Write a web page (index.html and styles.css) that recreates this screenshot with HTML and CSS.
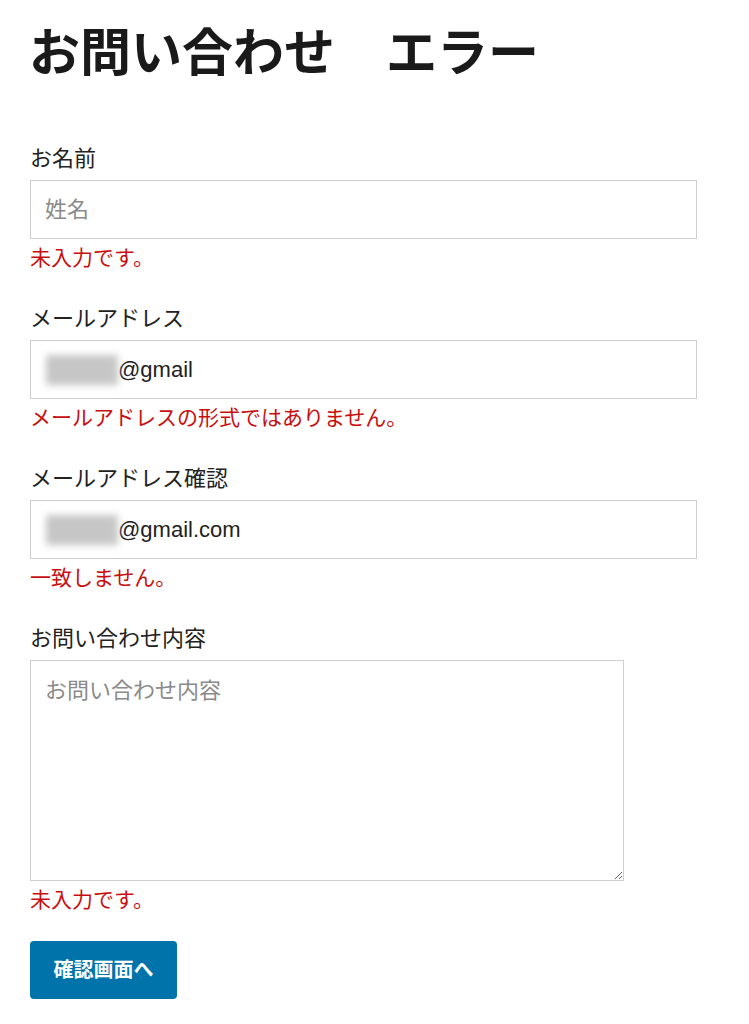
FILE: index.html
```html
<!DOCTYPE html>
<html lang="ja">
<head>
<meta charset="utf-8">
<title>お問い合わせ エラー</title>
<link rel="stylesheet" href="styles.css">
</head>
<body>
<main class="page">
  <h1 class="title">お問い合わせ　エラー</h1>
  <form class="form">
    <div class="field">
      <label class="label" for="name">お名前</label>
      <input class="input" id="name" type="text" placeholder="姓名">
      <p class="error">未入力です。</p>
    </div>
    <div class="field">
      <label class="label">メールアドレス</label>
      <div class="input input-filled"><span class="masked"></span>@gmail</div>
      <p class="error">メールアドレスの形式ではありません。</p>
    </div>
    <div class="field">
      <label class="label">メールアドレス確認</label>
      <div class="input input-filled"><span class="masked"></span>@gmail.com</div>
      <p class="error">一致しません。</p>
    </div>
    <div class="field">
      <label class="label" for="body">お問い合わせ内容</label>
      <textarea class="textarea" id="body" placeholder="お問い合わせ内容"></textarea>
      <p class="error">未入力です。</p>
    </div>
    <div class="actions">
      <button class="button" type="button">確認画面へ</button>
    </div>
  </form>
</main>
</body>
</html>
```

FILE: styles.css
```css
* {
  box-sizing: border-box;
}

body {
  margin: 0;
  background: #ffffff;
  color: #222222;
  font-family: "Liberation Sans", "Noto Sans CJK JP", sans-serif;
}

.page {
  padding: 24px 30px 0 29px;
}

.title {
  margin: 0;
  font-size: 51px;
  line-height: 60px;
  font-weight: 700;
  color: #1a1a1a;
}

.form {
  margin-top: 60px;
  margin-left: 1px;
  width: 667px;
  display: flex;
  flex-direction: column;
}

.field {
  display: flex;
  flex-direction: column;
}

.field + .field {
  margin-top: 31px;
}

.label {
  display: block;
  font-size: 22px;
  line-height: 30px;
  color: #222222;
  margin-bottom: 6px;
}

.input {
  width: 667px;
  height: 59px;
  border: 1px solid #cfcfcf;
  border-radius: 0;
  padding: 0 14px;
  font-family: inherit;
  font-size: 22px;
  color: #222222;
  background: #ffffff;
  outline: none;
}

.input::placeholder,
.textarea::placeholder {
  color: #8a8a8a;
}

.input-filled {
  display: flex;
  align-items: center;
}

.masked {
  display: inline-block;
  width: 72px;
  height: 30px;
  background: #c6c6c6;
  filter: blur(3.5px);
  margin-left: 1px;
}

.textarea {
  width: 594px;
  height: 221px;
  border: 1px solid #cfcfcf;
  border-radius: 0;
  padding: 15px 14px;
  font-family: inherit;
  font-size: 22px;
  line-height: 30px;
  color: #222222;
  background: #ffffff;
  outline: none;
}

.error {
  margin: 4px 0 0 0;
  font-size: 21px;
  line-height: 30px;
  color: #c80f0f;
}

.actions {
  margin-top: 26px;
}

.button {
  display: inline-block;
  height: 58px;
  padding: 0 23.5px;
  border: none;
  border-radius: 4px;
  background: #0073aa;
  color: #ffffff;
  font-family: inherit;
  font-size: 20px;
  font-weight: 700;
  line-height: 58px;
  cursor: pointer;
}
```
